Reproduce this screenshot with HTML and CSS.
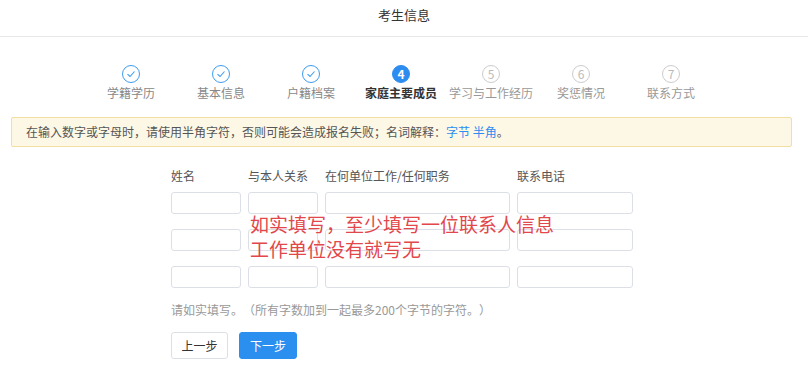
FILE: index.html
```html
<!DOCTYPE html>
<html lang="zh-CN">
<head>
  <meta charset="UTF-8">
  <title>考生信息</title>
  <link rel="stylesheet" href="styles.css">
</head>
<body>
  <header class="page-header">考生信息</header>

  <ol class="steps">
    <li class="step done">
      <span class="step-icon"><svg width="10" height="8" viewBox="0 0 10 8"><path d="M1.5 4.2 L4 6.5 L8.5 1.5" fill="none" stroke="#3d9cf0" stroke-width="1.1"/></svg></span>
      <span class="step-label">学籍学历</span>
    </li>
    <li class="step done">
      <span class="step-icon"><svg width="10" height="8" viewBox="0 0 10 8"><path d="M1.5 4.2 L4 6.5 L8.5 1.5" fill="none" stroke="#3d9cf0" stroke-width="1.1"/></svg></span>
      <span class="step-label">基本信息</span>
    </li>
    <li class="step done">
      <span class="step-icon"><svg width="10" height="8" viewBox="0 0 10 8"><path d="M1.5 4.2 L4 6.5 L8.5 1.5" fill="none" stroke="#3d9cf0" stroke-width="1.1"/></svg></span>
      <span class="step-label">户籍档案</span>
    </li>
    <li class="step active">
      <span class="step-icon">4</span>
      <span class="step-label">家庭主要成员</span>
    </li>
    <li class="step">
      <span class="step-icon">5</span>
      <span class="step-label">学习与工作经历</span>
    </li>
    <li class="step">
      <span class="step-icon">6</span>
      <span class="step-label">奖惩情况</span>
    </li>
    <li class="step">
      <span class="step-icon">7</span>
      <span class="step-label">联系方式</span>
    </li>
  </ol>

  <div class="notice">
    在输入数字或字母时，请使用半角字符，否则可能会造成报名失败；名词解释：<a href="#">字节</a> <a href="#">半角</a>。
  </div>

  <form class="family-form">
    <div class="form-grid">
      <label>姓名</label>
      <label>与本人关系</label>
      <label>在何单位工作/任何职务</label>
      <label>联系电话</label>

      <input type="text"><input type="text"><input type="text"><input type="text">
      <input type="text"><input type="text"><input type="text"><input type="text">
      <input type="text"><input type="text"><input type="text"><input type="text">
    </div>

    <div class="annotation">如实填写，至少填写一位联系人信息<br>工作单位没有就写无</div>

    <p class="form-hint">请如实填写。（所有字数加到一起最多200个字节的字符。）</p>

    <div class="form-actions">
      <button type="button" class="btn">上一步</button>
      <button type="button" class="btn btn-primary">下一步</button>
    </div>
  </form>
</body>
</html>
```

FILE: styles.css
```css
* {
  margin: 0;
  padding: 0;
  box-sizing: border-box;
}

body {
  font-family: "Noto Sans CJK SC", "Noto Sans", sans-serif;
  font-size: 12px;
  color: #333;
  background: #fff;
  width: 808px;
  height: 383px;
  overflow: hidden;
  text-spacing-trim: space-all;
}

.page-header {
  height: 37px;
  line-height: 30px;
  text-align: center;
  font-size: 13px;
  color: #333;
  border-bottom: 1px solid #e8e8e8;
}

/* steps */
.steps {
  list-style: none;
  display: flex;
  margin: 28px 0 0 86px;
}

.step {
  width: 90px;
  display: flex;
  flex-direction: column;
  align-items: center;
}

.step-icon {
  width: 18px;
  height: 18px;
  border-radius: 50%;
  border: 1px solid #ccc;
  color: #bbb;
  font-size: 12px;
  line-height: 16px;
  text-align: center;
  display: flex;
  align-items: center;
  justify-content: center;
}

.step.done .step-icon {
  border-color: #3d9cf0;
}

.step.active .step-icon {
  background: #2d8cf0;
  border-color: #2d8cf0;
  color: #fff;
  font-weight: bold;
}

.step-label {
  margin-top: 1px;
  line-height: 18px;
  color: #999;
  white-space: nowrap;
}

.step.done .step-label {
  color: #888;
}

.step.active .step-label {
  color: #333;
  font-weight: bold;
}

/* notice */
.notice {
  margin: 15px 16px 0 11px;
  height: 30px;
  line-height: 28px;
  padding-left: 14px;
  background: #fdf8e6;
  border: 1px solid #f4dfa2;
  border-radius: 2px;
  color: #555;
}

.notice a {
  color: #2d8cf0;
  text-decoration: none;
}

/* form */
.family-form {
  position: relative;
  margin: 20px 0 0 171px;
}

.form-grid {
  display: grid;
  grid-template-columns: 70px 70px 185px 116px;
  column-gap: 7px;
  row-gap: 15px;
}

.form-grid label {
  line-height: 18px;
  color: #555;
  margin-bottom: -8px;
}

.form-grid input {
  height: 22px;
  border: 1px solid #dcdfe6;
  border-radius: 3px;
  background: #fff;
}

.annotation {
  position: absolute;
  left: 79px;
  top: 44px;
  font-size: 19px;
  line-height: 25px;
  color: #e2474b;
  white-space: nowrap;
}

.form-hint {
  margin-top: 13px;
  line-height: 18px;
  color: #999;
}

.form-actions {
  display: flex;
  gap: 11px;
  margin-top: 13px;
}

.btn {
  height: 27px;
  width: 57px;
  border: 1px solid #dcdfe6;
  border-radius: 3px;
  background: #fff;
  color: #333;
  font-family: inherit;
  font-size: 12px;
}

.btn-primary {
  width: 58px;
  background: #2b8ff0;
  border-color: #2b8ff0;
  color: #fff;
}
```
